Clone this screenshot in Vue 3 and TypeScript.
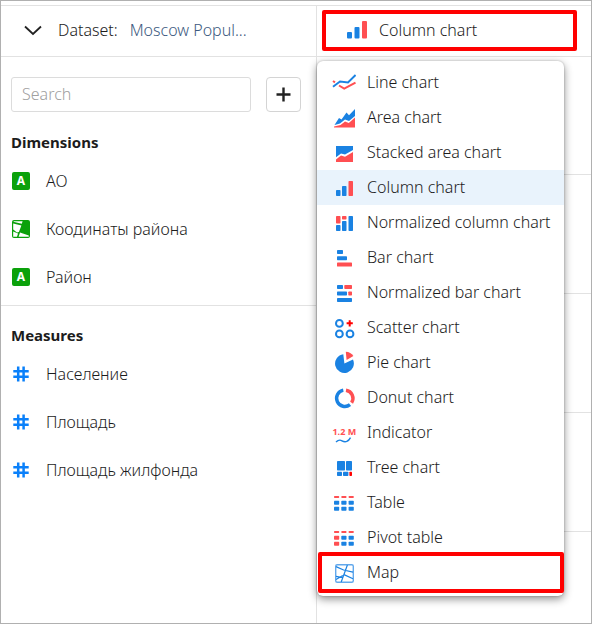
<script setup lang="ts">
import { ref } from 'vue'

type Tone = 'blue' | 'red' | 'alert'
// x, y, width, height, tone
type Block = [number, number, number, number, Tone]

interface ChartType {
  id: string
  label: string
  blocks?: Block[]
}

interface Field {
  label: string
  kind: 'string' | 'geo' | 'number'
}

const columnBlocks: Block[] = [
  [4, 15, 4.5, 6, 'blue'],
  [10, 11, 4.5, 10, 'blue'],
  [16.5, 6, 4.5, 15, 'red'],
]

function tableBlocks(firstColumn: Tone): Block[] {
  return [2, 9.3, 16.6].flatMap((x, i): Block[] => {
    const tone: Tone = i === 0 ? firstColumn : 'blue'
    return [
      [x, 6, 5.2, 2, 'red'],
      [x, 10.7, 5.2, 4, tone],
      [x, 16.7, 5.2, 4, tone],
    ]
  })
}

const chartTypes: ChartType[] = [
  { id: 'line', label: 'Line chart' },
  { id: 'area', label: 'Area chart' },
  { id: 'stacked', label: 'Stacked area chart' },
  { id: 'column', label: 'Column chart', blocks: columnBlocks },
  {
    id: 'column100',
    label: 'Normalized column chart',
    blocks: [
      [4, 6, 4.5, 7.5, 'red'],
      [4, 15, 4.5, 6, 'blue'],
      [10, 6, 4.5, 3.5, 'red'],
      [10, 11, 4.5, 10, 'blue'],
      [16.5, 6, 4.5, 15, 'blue'],
    ],
  },
  {
    id: 'bar',
    label: 'Bar chart',
    blocks: [
      [5, 5, 6, 4, 'blue'],
      [5, 11.3, 10, 4, 'blue'],
      [5, 17.6, 15, 4, 'red'],
    ],
  },
  {
    id: 'bar100',
    label: 'Normalized bar chart',
    blocks: [
      [5, 5, 6, 4, 'blue'],
      [12.3, 5, 7.7, 4, 'red'],
      [5, 11.5, 10, 4, 'blue'],
      [16.3, 11.5, 3.7, 4, 'red'],
      [5, 18, 15, 4, 'blue'],
    ],
  },
  { id: 'scatter', label: 'Scatter chart' },
  { id: 'pie', label: 'Pie chart' },
  { id: 'donut', label: 'Donut chart' },
  { id: 'indicator', label: 'Indicator' },
  {
    id: 'tree',
    label: 'Tree chart',
    blocks: [
      [5, 6, 8, 9.5, 'blue'],
      [14, 6, 6, 9.5, 'blue'],
      [5, 16.7, 5, 4.3, 'blue'],
      [11, 16.7, 5.4, 4.3, 'blue'],
      [17.4, 16.7, 2.6, 4.3, 'alert'],
    ],
  },
  { id: 'table', label: 'Table', blocks: tableBlocks('blue') },
  { id: 'pivot', label: 'Pivot table', blocks: tableBlocks('red') },
  { id: 'map', label: 'Map' },
]

const sections: { title: string; fields: Field[] }[] = [
  {
    title: 'Dimensions',
    fields: [
      { label: 'АО', kind: 'string' },
      { label: 'Коодинаты района', kind: 'geo' },
      { label: 'Район', kind: 'string' },
    ],
  },
  {
    title: 'Measures',
    fields: [
      { label: 'Население', kind: 'number' },
      { label: 'Площадь', kind: 'number' },
      { label: 'Площадь жилфонда', kind: 'number' },
    ],
  },
]

const selected = ref('column')
const search = ref('')
</script>

<template>
  <div class="wizard">
    <aside class="dataset">
      <header class="dataset-head">
        <button class="toggle" type="button" aria-label="Collapse dataset">
          <svg class="chevron" viewBox="0 0 18 18"><path d="M1 5.5 9 13 17 5.5" /></svg>
        </button>
        <span class="dataset-label">Dataset:</span>
        <a class="dataset-name" href="#">Moscow Popul...</a>
      </header>

      <div class="search-row">
        <input v-model="search" class="search" type="text" placeholder="Search" aria-label="Search" />
        <button class="add" type="button" aria-label="Add field">
          <svg class="plus" viewBox="0 0 15 15"><path d="M7.5 0.5v14M0.5 7.5h14" /></svg>
        </button>
      </div>

      <section v-for="section in sections" :key="section.title" class="group">
        <h2 class="group-title">{{ section.title }}</h2>
        <ul class="fields">
          <li v-for="field in section.fields" :key="field.label" class="field">
            <svg class="field-icon" viewBox="0 0 18 18" aria-hidden="true">
              <template v-if="field.kind === 'string'">
                <rect class="green" width="18" height="18" rx="2" />
                <text class="letter" x="9" y="13.4">A</text>
              </template>
              <template v-else-if="field.kind === 'geo'">
                <rect class="green" width="18" height="18" rx="2" />
                <path class="white" d="M2.2 1.2H10.6L9.8 3.8 1.2 1.8zM1.2 3.4 9.4 5.4 6.9 12 5 12.6 1.2 9.6zM1.2 11.4 6 13.6 5 16.8H1.2zM8 12.4 16.8 15.4V16.8H6.6z" />
              </template>
              <path v-else class="hash" d="M6.2 1.4v15.2M11.6 1.4v15.2M1.3 6.3h15.4M1.3 11.8h15.4" />
            </svg>
            <span>{{ field.label }}</span>
          </li>
        </ul>
      </section>
    </aside>

    <main class="visual">
      <div class="visual-head">
        <button class="chart-select" type="button" aria-haspopup="listbox">
          <svg class="icon" viewBox="0 0 24 24" aria-hidden="true">
            <rect class="blue" x="2" y="14" width="5" height="6.5" rx="1" />
            <rect class="blue" x="9.5" y="9" width="5" height="11.5" rx="1" />
            <rect class="red" x="17" y="3" width="5" height="17.5" rx="1" />
          </svg>
          <span>Column chart</span>
        </button>
      </div>
      <div class="shelves">
        <div v-for="n in 4" :key="n" class="shelf"></div>
      </div>

      <div class="menu" role="listbox" aria-label="Chart type">
        <button
          v-for="chart in chartTypes"
          :key="chart.id"
          class="option"
          :class="{ selected: chart.id === selected, marked: chart.id === 'map' }"
          type="button"
          role="option"
          :aria-selected="chart.id === selected"
          @click="selected = chart.id"
        >
          <svg class="icon" viewBox="0 0 24 24" aria-hidden="true">
            <rect
              v-for="(b, i) in chart.blocks"
              :key="i"
              :class="b[4]"
              :x="b[0]"
              :y="b[1]"
              :width="b[2]"
              :height="b[3]"
              rx="0.7"
            />
            <template v-if="chart.id === 'line'">
              <path class="line red-line" d="M1 11 3 12.4M7 15.5 12.2 18.7 23.5 12.7" />
              <path class="line blue-line" d="M1 16.7 8 11.5 16 12.4 23.6 5" />
            </template>
            <template v-else-if="chart.id === 'area'">
              <path class="blue" d="M2.5 20 7 13 9.5 14.5 14.5 7.5 17 10.3 23 4V11L17 16 13 14.5 8 18.5z" />
              <path class="red" d="M2 22.6V21.6L8.5 20 13 16.4 16.8 18 23 12.4V22.6z" />
            </template>
            <template v-else-if="chart.id === 'stacked'">
              <path class="blue" d="M4 6H21V10L13 14.5 9 13.5 4 17.3z" />
              <path class="red" d="M4 22V19.4L9 15.6 13 16.8 21 12V22z" />
            </template>
            <template v-else-if="chart.id === 'scatter'">
              <circle class="ring" cx="7.4" cy="8.4" r="3.4" />
              <circle class="ring" cx="7.4" cy="18.9" r="3.4" />
              <circle class="ring" cx="18" cy="18.9" r="3.4" />
              <path class="cross" d="M17.7 5.2V11.4M14.6 8.3H20.8" />
            </template>
            <template v-else-if="chart.id === 'pie'">
              <path class="blue" d="M12.4 13.4 11.3 4.2A9.4 9.4 0 1 0 21 9.6z" />
              <path class="red" d="M13.8 1.7A9.4 9.4 0 0 1 21.4 6L14.6 10z" />
            </template>
            <template v-else-if="chart.id === 'donut'">
              <path class="arc blue-line" d="M11.3 5.2A8.2 8.2 0 1 0 18 19.6" />
              <path class="arc red-line" d="M14 5.2A8.2 8.2 0 0 1 19.6 17.8" />
            </template>
            <template v-else-if="chart.id === 'indicator'">
              <text class="figure" x="12.3" y="14.8">1.2 M</text>
              <path class="thin" d="M4 22C6.5 19.6 8 19.6 10 20.8 13.5 22.8 16.5 21.4 18.5 17.6" />
            </template>
            <template v-else-if="chart.id === 'map'">
              <rect class="map-frame" x="3.7" y="4.7" width="17.6" height="17.6" rx="1.5" />
              <path class="map-roads" d="M4 6.6 11.6 10 21 12.2M15.4 5 9.2 22M4 16.4 10.8 17.6M12 14.6 21 18.8M4 19.6 10.8 15.4" />
            </template>
          </svg>
          <span>{{ chart.label }}</span>
        </button>
      </div>
    </main>
  </div>
</template>

<style>
body {
  margin: 0;
  background: #fff;
}
</style>

<style scoped>
.wizard {
  box-sizing: border-box;
  display: grid;
  grid-template-columns: 316px 1fr;
  min-height: 100vh;
  padding-top: 4px;
  border: 1px solid #b0b0b0;
  background: #fff;
  color: #1c1c1c;
  font: 300 16px/24px "Noto Sans", "Open Sans", sans-serif;
}

button {
  padding: 0;
  border: 0;
  background: none;
  color: inherit;
  font: inherit;
  cursor: pointer;
}

.dataset {
  border-top: 1px solid #e2e2e2;
  border-right: 1px solid #e2e2e2;
}

.dataset-head {
  box-sizing: border-box;
  display: flex;
  align-items: center;
  height: 51px;
  padding: 0 0 2px 23px;
  border-bottom: 1px solid #e2e2e2;
}

.toggle {
  display: flex;
  margin-right: 16px;
}

.chevron {
  width: 18px;
  height: 18px;
  fill: none;
  stroke: #222;
  stroke-width: 1.8;
}

.dataset-label {
  margin-right: 12px;
}

.dataset-name {
  color: #3d5a80;
  text-decoration: none;
}

.search-row {
  display: flex;
  gap: 15px;
  padding: 20px 15px 1px 10px;
}

.search {
  box-sizing: border-box;
  flex: 1;
  min-width: 0;
  height: 35px;
  padding: 0 10px 2px;
  border: 1px solid #dcdcdc;
  border-radius: 3px;
  font: inherit;
}

.search::placeholder {
  color: #a0a0a0;
  opacity: 1;
}

.add {
  box-sizing: border-box;
  display: flex;
  align-items: center;
  justify-content: center;
  width: 35px;
  height: 35px;
  border: 1px solid #d4d4d4;
  border-radius: 4px;
}

.plus {
  width: 15px;
  height: 15px;
  fill: none;
  stroke: #222;
  stroke-width: 2.4;
}

.group {
  padding: 17px 10px 4px;
}

.group + .group {
  border-top: 1px solid #e2e2e2;
}

.group-title {
  margin: 0;
  font-size: 15px;
  font-weight: 700;
  line-height: 24px;
}

.fields {
  margin: 0;
  padding: 3px 0 0;
  list-style: none;
}

.field {
  display: flex;
  align-items: center;
  gap: 16px;
  height: 48px;
  padding-left: 1px;
}

.field-icon {
  width: 18px;
  height: 18px;
}

.green {
  fill: #0ba10b;
}

.white {
  fill: #fff;
}

.letter {
  fill: #fff;
  font: 700 12px "Noto Sans", sans-serif;
  text-anchor: middle;
}

.hash {
  fill: none;
  stroke: #0a80fa;
  stroke-width: 2.5;
}

.visual {
  position: relative;
  border-top: 1px solid #e2e2e2;
}

.visual-head {
  box-sizing: border-box;
  height: 51px;
  padding: 4px 14px 5px 5px;
  border-bottom: 1px solid #e2e2e2;
}

.chart-select {
  display: flex;
  align-items: center;
  gap: 10px;
  width: 100%;
  height: 41px;
  padding: 0 0 1px 19px;
  border: 4px solid #f00;
  border-radius: 2px;
}

.icon {
  flex: none;
  width: 24px;
  height: 24px;
}

.shelves {
  margin-top: -1px;
}

.shelf {
  box-sizing: border-box;
  height: 119px;
  border-bottom: 1px solid #e2e2e2;
}

.menu {
  position: absolute;
  top: 55px;
  left: 0;
  display: flex;
  flex-direction: column;
  width: 247px;
  padding: 4px 0 6px;
  border-radius: 6px;
  background: #fff;
  box-shadow: 0 3px 8px rgba(0, 0, 0, 0.45), 0 0 2px rgba(0, 0, 0, 0.25);
}

.option {
  position: relative;
  box-sizing: border-box;
  display: flex;
  align-items: center;
  gap: 11px;
  height: 35px;
  padding: 0 0 1px 15px;
  text-align: left;
  white-space: nowrap;
}

.option.selected {
  background: #e9f3fc;
}

.option.marked::after {
  content: "";
  position: absolute;
  inset: -3px 0 -3px 1px;
  border: 4px solid #f00;
  border-radius: 2px;
}

.blue {
  fill: #1a82e2;
}

.red {
  fill: #ff4f52;
}

.alert {
  fill: #f00;
}

.line,
.arc,
.ring,
.cross,
.thin,
.map-frame,
.map-roads {
  fill: none;
}

.line {
  stroke-width: 2;
}

.arc {
  stroke-width: 3.4;
}

.blue-line,
.ring,
.thin,
.map-roads {
  stroke: #1a82e2;
}

.red-line {
  stroke: #ff4f52;
}

.ring {
  stroke-width: 2;
}

.cross {
  stroke: #f00;
  stroke-width: 2;
}

.thin {
  stroke-width: 1.4;
}

.map-frame {
  stroke: #62a8ec;
  stroke-width: 1.4;
}

.map-roads {
  stroke-width: 1.2;
}

.figure {
  fill: #ff4f52;
  font: 700 9px "Noto Sans", sans-serif;
  text-anchor: middle;
}
</style>
